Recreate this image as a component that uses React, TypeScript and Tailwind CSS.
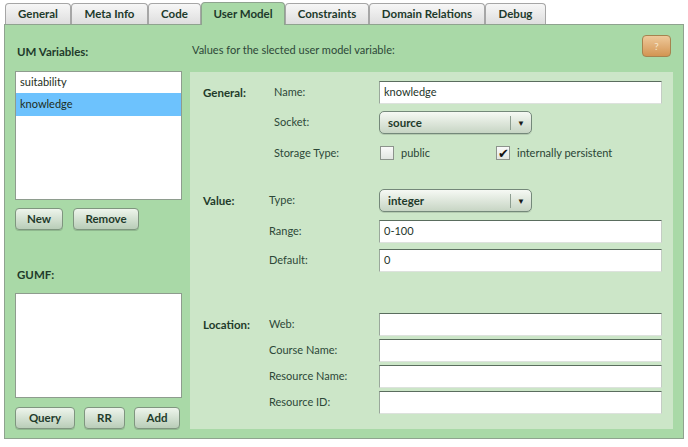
import React from 'react';

const tabs = [
  { label: 'General', w: 'w-[66px]' },
  { label: 'Meta Info', w: 'w-[77px]' },
  { label: 'Code', w: 'w-[53px]' },
  { label: 'User Model', w: 'w-[84px]' },
  { label: 'Constraints', w: 'w-[84px]' },
  { label: 'Domain Relations', w: 'w-[116px]' },
  { label: 'Debug', w: 'w-[61px]' },
];

function Button({ label, w }: { label: string; w: string }) {
  return (
    <button
      className={`${w} h-[22px] rounded-[4px] border border-[#7f957f] bg-gradient-to-b from-[#eef5ec] to-[#b9cdb8] text-[11.5px] font-bold text-[#1f3b2b] shadow-[0_1px_0_rgba(0,0,0,0.15)]`}
    >
      {label}
    </button>
  );
}

function TextInput({ value = '' }: { value?: string }) {
  return (
    <div className="flex-1 h-[23px] bg-white border-t border-l border-r border-b border-t-[#5a6d5e] border-l-[#9aa89c] border-r-[#c4ccc4] border-b-[#dde2dd] pl-[4px] flex items-center text-[11px] text-[#24352a]">
      {value}
    </div>
  );
}

function Select({ value }: { value: string }) {
  return (
    <div className="w-[153px] h-[23px] rounded-[5px] border border-[#74887a] bg-gradient-to-b from-[#f6f9f4] to-[#c7d5c4] flex items-center text-[11.5px] font-bold text-[#1f3b2b] shadow-[0_1px_0_rgba(0,0,0,0.12)]">
      <span className="flex-1 pl-[8px]">{value}</span>
      <span className="w-px h-[14px] bg-[#8d9d90]" />
      <span className="w-[20px] text-center text-[8px] text-[#1a1a1a]">▼</span>
    </div>
  );
}

function Checkbox({ checked, label }: { checked?: boolean; label: string }) {
  return (
    <div className="flex items-center gap-[7px]">
      <div className="w-[14px] h-[14px] border border-[#8c938c] bg-gradient-to-b from-[#fafafa] to-[#e2e6e2] flex items-center justify-center text-[13px] leading-none text-[#111]">
        {checked ? '✔' : ''}
      </div>
      <span className="text-[11px] text-[#2a4434]">{label}</span>
    </div>
  );
}

function Row({
  section,
  label,
  indent,
  className = '',
  children,
}: {
  section?: string;
  label: string;
  indent?: boolean;
  className?: string;
  children: React.ReactNode;
}) {
  return (
    <div className={`flex items-center h-[23px] pr-[11px] ${className}`}>
      <div className="w-[66px] pl-[13px] box-content text-[11.5px] font-bold text-[#1f3b2b]">{section}</div>
      <div className={`w-[110px] text-[11px] text-[#2d4838] ${indent ? 'pl-[5px]' : ''}`}>{label}</div>
      {children}
    </div>
  );
}

export default function App() {
  return (
    <div className="w-[688px] h-[447px] bg-white font-['Lato',sans-serif]">
      <div className="flex pl-[5px] pt-[3px] h-[24px]">
        {tabs.map((t) => {
          const active = t.label === 'User Model';
          return (
            <div
              key={t.label}
              className={`${t.w} flex items-center justify-center rounded-t-[4px] border border-b-0 text-[11.5px] font-bold text-[#1d3a2b] ${
                active
                  ? '-mt-[1px] relative z-10 border-[#8fa38f] bg-[#a9d9a7] mb-[-1px] h-[23px]'
                  : 'h-[21px] border-[#a6a6a6] bg-gradient-to-b from-[#f7f7f7] to-[#dedede]'
              }`}
            >
              {t.label}
            </div>
          );
        })}
      </div>
      <div className="ml-[4px] w-[680px] h-[415px] border border-[#8fa38f] bg-[#a9d9a7] flex gap-[8px] pl-[10px]">
        <div className="w-[167px] pt-[17px] flex flex-col">
          <div className="h-[20px] leading-[20px] pl-[2px] text-[11.5px] font-bold text-[#1f3b2b]">UM Variables:</div>
          <div className="mt-[9px] h-[129px] bg-white border border-[#8e9c8e] flex flex-col text-[11px] text-[#1d2d22]">
            <div className="h-[21px] pl-[4px] flex items-center">suitability</div>
            <div className="h-[23px] pl-[4px] flex items-center bg-[#6dc2fd]">knowledge</div>
          </div>
          <div className="mt-[8px] flex gap-[10px]">
            <Button label="New" w="w-[48px]" />
            <Button label="Remove" w="w-[66px]" />
          </div>
          <div className="mt-[35px] h-[20px] leading-[20px] pl-[2px] text-[11.5px] font-bold text-[#1f3b2b]">GUMF:</div>
          <div className="mt-[8px] h-[105px] bg-white border border-[#8e9c8e]" />
          <div className="mt-[9px] flex gap-[9px]">
            <Button label="Query" w="w-[60px]" />
            <Button label="RR" w="w-[41px]" />
            <Button label="Add" w="w-[46px]" />
          </div>
        </div>
        <div className="w-[483px] pt-[10px] flex flex-col">
          <div className="h-[22px] flex items-start justify-between">
            <span className="mt-[7px] pl-[2px] text-[11px] text-[#2d4838]">Values for the slected user model variable:</span>
            <div className="mr-[2px] w-[29px] h-[22px] rounded-[4px] border border-[#a6834f] bg-gradient-to-b from-[#eec99a] to-[#d39552] flex items-center justify-center text-[10px] text-[#f6e6cc]">
              ?
            </div>
          </div>
          <div className="mt-[15px] h-[357px] bg-[#cce6c8] pt-[9px] flex flex-col">
            <Row section="General:" label="Name:" indent>
              <TextInput value="knowledge" />
            </Row>
            <Row label="Socket:" indent className="mt-[7px]">
              <Select value="source" />
            </Row>
            <Row label="Storage Type:" indent className="mt-[8px] !h-[22px]">
              <div className="flex items-center pl-[1px]">
                <div className="w-[116px]">
                  <Checkbox label="public" />
                </div>
                <Checkbox checked label="internally persistent" />
              </div>
            </Row>
            <Row section="Value:" label="Type:" className="mt-[25px]">
              <Select value="integer" />
            </Row>
            <Row label="Range:" className="mt-[8px]">
              <TextInput value="0-100" />
            </Row>
            <Row label="Default:" className="mt-[6px]">
              <TextInput value="0" />
            </Row>
            <Row section="Location:" label="Web:" className="mt-[41px]">
              <TextInput />
            </Row>
            <Row label="Course Name:" className="mt-[3px]">
              <TextInput />
            </Row>
            <Row label="Resource Name:" className="mt-[3px]">
              <TextInput />
            </Row>
            <Row label="Resource ID:" className="mt-[3px]">
              <TextInput />
            </Row>
          </div>
        </div>
      </div>
    </div>
  );
}
